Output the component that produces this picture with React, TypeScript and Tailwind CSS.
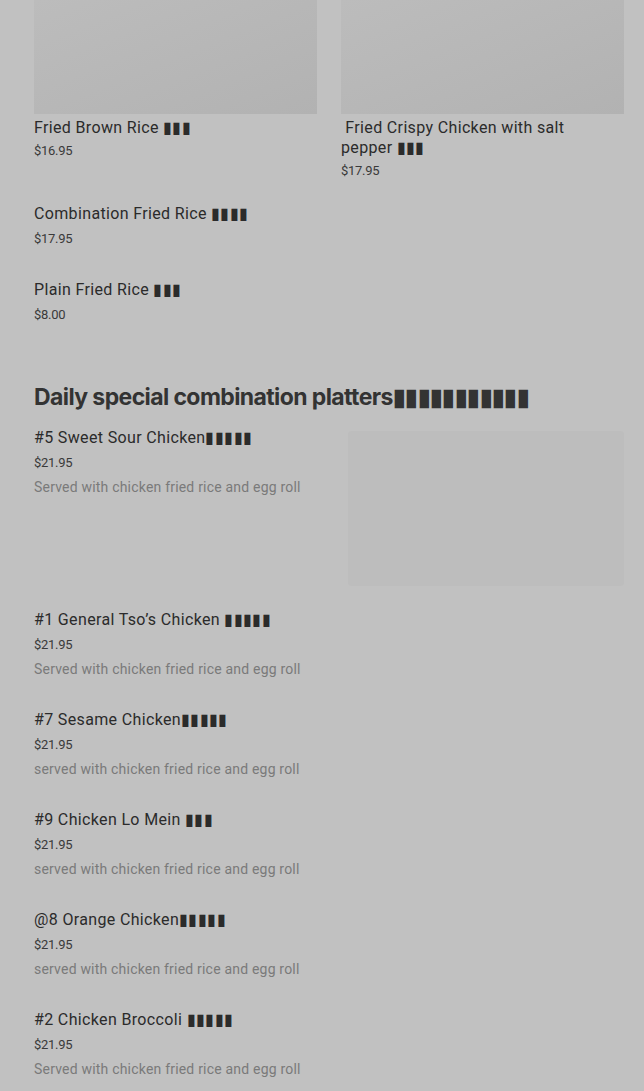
import React from 'react';

type Dish = { name: string; price: string; desc?: string };

const topCards: Dish[] = [
  { name: 'Fried Brown Rice ▮▮▮', price: '$16.95' },
  { name: '\u00a0Fried Crispy Chicken with salt pepper ▮▮▮', price: '$17.95' },
];

const riceList: Dish[] = [
  { name: 'Combination Fried Rice ▮▮▮▮', price: '$17.95' },
  { name: 'Plain Fried Rice ▮▮▮', price: '$8.00' },
];

const platters: Dish[] = [
  { name: '#1 General Tso’s Chicken ▮▮▮▮▮', price: '$21.95', desc: 'Served with chicken fried rice and egg roll' },
  { name: '#7 Sesame Chicken▮▮▮▮▮', price: '$21.95', desc: 'served with chicken fried rice and egg roll' },
  { name: '#9 Chicken Lo Mein ▮▮▮', price: '$21.95', desc: 'served with chicken fried rice and egg roll' },
  { name: '@8 Orange Chicken▮▮▮▮▮', price: '$21.95', desc: 'served with chicken fried rice and egg roll' },
  { name: '#2 Chicken Broccoli ▮▮▮▮▮', price: '$21.95', desc: 'Served with chicken fried rice and egg roll' },
];

const Title: React.FC<{ text: string }> = ({ text }) => (
  <div className="text-[16px] leading-[20px] font-normal tracking-[0.35px] text-[#2b2b2b]">{text}</div>
);

const Price: React.FC<{ text: string }> = ({ text }) => (
  <div className="text-[13px] leading-[18px] tracking-[-0.3px] text-[#3a3a3a]">{text}</div>
);

const Desc: React.FC<{ text: string }> = ({ text }) => (
  <div className="text-[14px] leading-[20px] tracking-[0.2px] text-[#7a7a7a]">{text}</div>
);

const App: React.FC = () => {
  return (
    <div className="min-h-screen bg-[#c1c1c1] pl-[34px] pr-[20px] font-['Roboto',sans-serif]">
      {/* top image cards */}
      <div className="grid grid-cols-2 gap-6">
        {topCards.map((d) => (
          <div key={d.name}>
            <div className="h-[114px] bg-gradient-to-br from-[#bcbcbc] to-[#b2b2b2]" />
            <div className="mt-1 pr-10">
              <Title text={d.name} />
            </div>
            <div className="mt-1">
              <Price text={d.price} />
            </div>
          </div>
        ))}
      </div>

      <div className="mt-6 flex flex-col gap-8">
        {riceList.map((d) => (
          <div key={d.name} className="flex flex-col gap-[6px]">
            <Title text={d.name} />
            <Price text={d.price} />
          </div>
        ))}
      </div>

      <h2 className="mt-[57px] text-[23px] leading-[32px] font-bold tracking-[-0.6px] text-[#333333] font-['Inter',sans-serif]">
        Daily special combination platters▮▮▮▮▮▮▮▮▮▮▮
      </h2>

      <div className="mt-[15px] flex items-start justify-between">
        <div className="flex flex-col">
          <Title text="#5 Sweet Sour Chicken▮▮▮▮▮" />
          <div className="mt-[6px]">
            <Price text="$21.95" />
          </div>
          <div className="mt-[5px]">
            <Desc text="Served with chicken fried rice and egg roll" />
          </div>
        </div>
        <div className="mt-[3px] h-[155px] w-[276px] rounded-sm bg-[#bdbdbd]" />
      </div>

      <div className="mt-6 flex flex-col gap-[31px] pb-10">
        {platters.map((d) => (
          <div key={d.name} className="flex flex-col">
            <Title text={d.name} />
            <div className="mt-[6px]">
              <Price text={d.price} />
            </div>
            <div className="mt-[5px]">
              <Desc text={d.desc ?? ''} />
            </div>
          </div>
        ))}
      </div>
    </div>
  );
};

export default App;
